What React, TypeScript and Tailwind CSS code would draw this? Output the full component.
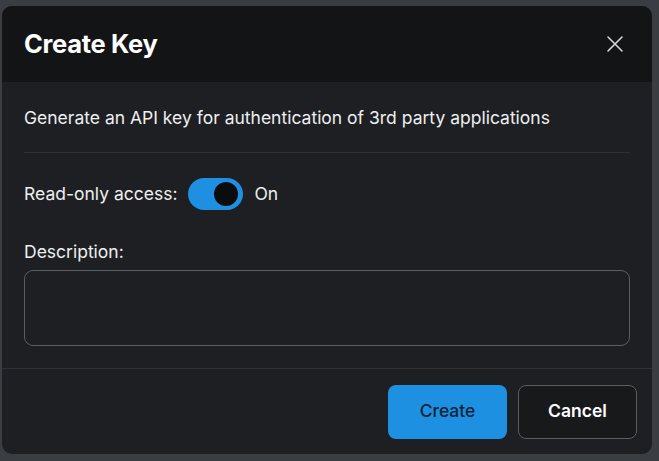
import React, { useState } from "react";

function CloseIcon() {
  return (
    <svg width="18" height="18" viewBox="0 0 18 18" fill="none">
      <path
        d="M2 2L16 16M16 2L2 16"
        stroke="#d4d6d8"
        strokeWidth="1.6"
        strokeLinecap="round"
      />
    </svg>
  );
}

function Toggle({ on, onChange }: { on: boolean; onChange: () => void }) {
  return (
    <button
      onClick={onChange}
      className={
        on
          ? "w-[55px] h-[32px] rounded-full bg-[#1e8fe1] flex items-center justify-end px-[5px]"
          : "w-[55px] h-[32px] rounded-full bg-[#4a4d51] flex items-center justify-start px-[5px]"
      }
    >
      <span className="w-[24px] h-[24px] rounded-full bg-[#0b0c0d] block" />
    </button>
  );
}

export default function App() {
  const [readOnly, setReadOnly] = useState(true);

  return (
    <div
      className="w-[659px] h-[461px] bg-[#3a3d41] pt-[6px] pl-[2px] pr-[7px] pb-[7px]"
      style={{ fontFamily: "Inter, 'Noto Sans', sans-serif" }}
    >
      <div className="h-full rounded-[10px] bg-[#1d1f22] overflow-hidden flex flex-col">
        <div className="h-[76px] bg-[#131416] flex items-center justify-between pl-[22px] pr-[28px]">
          <h1 className="text-[25.5px] font-bold text-white tracking-[-0.3px]">
            Create Key
          </h1>
          <button>
            <CloseIcon />
          </button>
        </div>

        <div className="px-[22px] flex-1">
          <div className="h-[71px] pt-[2px] flex items-center border-b border-[#2e3135] text-[17.5px] text-[#eeeff0]">
            Generate an API key for authentication of 3rd party applications
          </div>
          <div className="flex items-center gap-[11px] mt-[25px] text-[17.5px] text-[#eeeff0]">
            <span>Read-only access:</span>
            <Toggle on={readOnly} onChange={() => setReadOnly(!readOnly)} />
            <span>{readOnly ? "On" : "Off"}</span>
          </div>
          <div className="mt-[29px] text-[17.5px] text-[#eeeff0] leading-[26px]">
            Description:
          </div>
          <textarea className="mt-[5px] w-full h-[76px] rounded-[9px] border border-[#5b5f63] bg-transparent resize-none outline-none text-[#e6e7e8] p-2" />
        </div>

        <div className="border-t border-[#2e3135] h-[86px] flex items-center justify-end gap-[11px] pr-[15px]">
          <button className="w-[119px] h-[54px] rounded-[8px] bg-[#1e90e1] text-[#0c2338] text-[17.5px] font-medium">
            Create
          </button>
          <button className="w-[119px] h-[54px] rounded-[8px] border border-[#5b5f63] bg-[#17191b] text-white text-[17.5px] font-semibold">
            Cancel
          </button>
        </div>
      </div>
    </div>
  );
}
